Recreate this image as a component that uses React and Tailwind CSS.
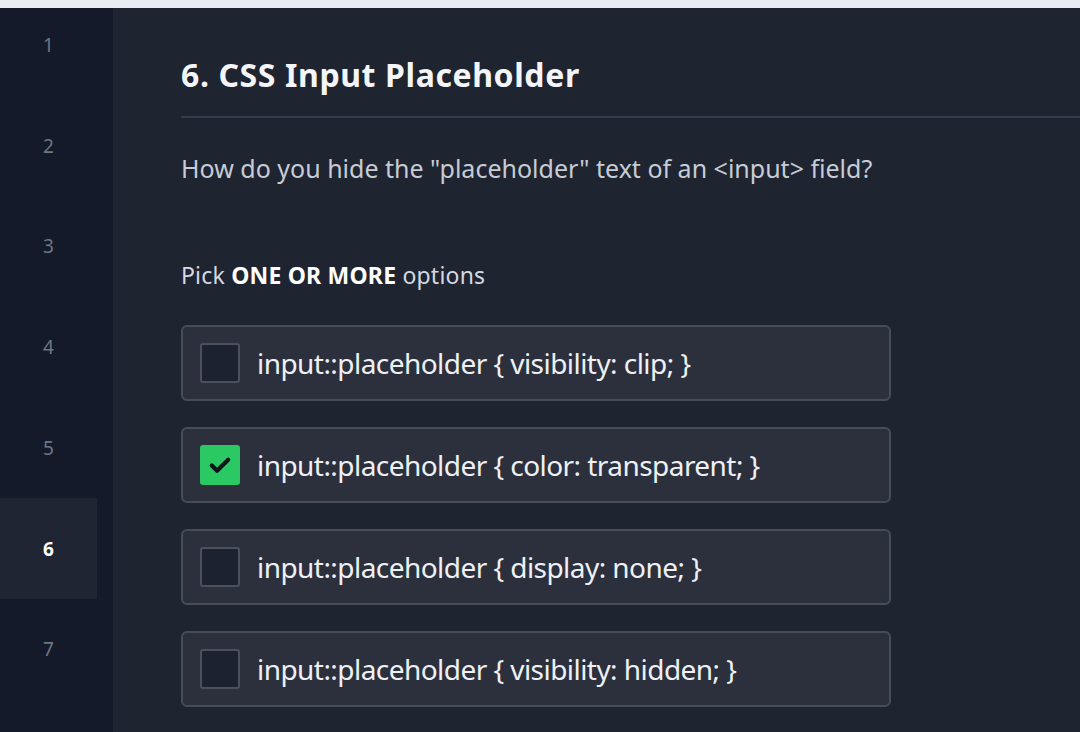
const options = [
  { text: "input::placeholder { visibility: clip; }", checked: false },
  { text: "input::placeholder { color: transparent; }", checked: true },
  { text: "input::placeholder { display: none; }", checked: false },
  { text: "input::placeholder { visibility: hidden; }", checked: false },
];

const rows = [1, 2, 3, 4, 5, 6, 7];

function Option({ text, checked }) {
  return (
    <div className="flex items-center h-[76px] w-[710px] rounded-md border-2 border-[#474c59] bg-[#2c303d] pl-[17px]">
      {checked ? (
        <div className="w-[40px] h-[40px] rounded-[3px] bg-[#2bc963] flex items-center justify-center">
          <svg width="28" height="28" viewBox="0 0 24 24" fill="none" stroke="#0f141c" strokeWidth="3.6" strokeLinecap="round" strokeLinejoin="round">
            <path d="M5 12.5l4.5 4.5L19 7.5" />
          </svg>
        </div>
      ) : (
        <div className="w-[40px] h-[40px] rounded-[3px] border-2 border-[#4b505c] bg-[#1d2230]" />
      )}
      <span className="ml-[17px] text-[28px] leading-[36px] tracking-[-0.55px] text-[#eef0f4]">{text}</span>
    </div>
  );
}

export default function App() {
  return (
    <div className="w-[1080px] h-[732px] overflow-hidden flex flex-col bg-[#e9ecf0] font-['Noto_Sans',sans-serif]">
      <div className="h-[8px] shrink-0" />
      <div className="flex flex-1 min-h-0">
        <aside className="w-[113px] shrink-0 bg-[#141a2a] overflow-hidden">
          <div className="w-[97px] -mt-[13px]">
            {rows.map((n) => (
              <div
                key={n}
                className={`h-[100.7px] flex items-center justify-center text-[19px] ${
                  n === 6 ? "bg-[#1f2533] text-white font-bold" : "text-[#6f7684]"
                }`}
              >
                {n}
              </div>
            ))}
          </div>
        </aside>
        <main className="flex-1 bg-[#1f2431] pl-[68px] pt-[45px]">
          <h1 className="text-[32px] font-bold tracking-[0.6px] text-[#f3f5f8] leading-[44px]">6. CSS Input Placeholder</h1>
          <div className="mt-[19px] h-[2px] bg-[#363b49]" />
          <p className="mt-[35px] text-[25px] text-[#c7ccd4] leading-[30px]">
            How do you hide the "placeholder" text of an &lt;input&gt; field?
          </p>
          <p className="mt-[78px] text-[23px] tracking-[0.2px] text-[#d5d9e0] leading-[28px]">
            Pick <span className="font-bold text-white">ONE OR MORE</span> options
          </p>
          <div className="mt-[36px] flex flex-col gap-[26px]">
            {options.map((o) => (
              <Option key={o.text} {...o} />
            ))}
          </div>
        </main>
      </div>
    </div>
  );
}
